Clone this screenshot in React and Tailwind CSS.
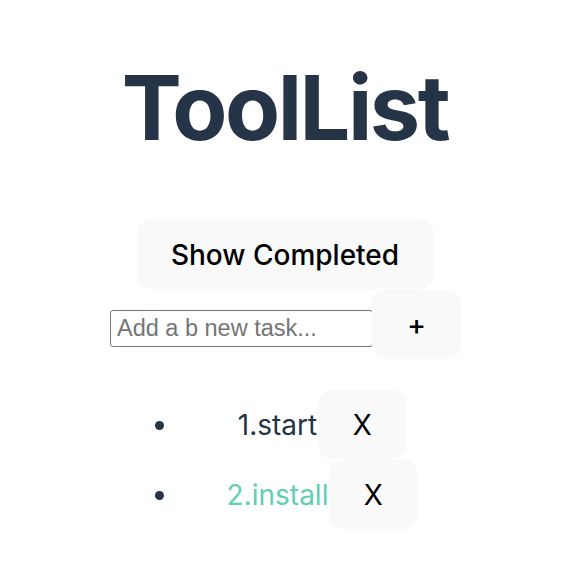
import { useState } from 'react';

const btn = 'rounded-[14px] bg-[#f9f9f9] text-black border border-transparent font-medium';

export default function App() {
  const [tasks, setTasks] = useState([
    { id: 1, text: 'start', done: false },
    { id: 2, text: 'install', done: true },
  ]);
  const [draft, setDraft] = useState('');

  const addTask = () => {
    if (!draft.trim()) return;
    setTasks([...tasks, { id: tasks.length + 1, text: draft, done: false }]);
    setDraft('');
  };

  return (
    <div className="min-h-screen bg-white pl-[8px] text-center" style={{ fontFamily: 'Inter, "Noto Sans", sans-serif' }}>
      <h1 className="pt-[63px] text-[90px] font-bold leading-none tracking-[-2.5px] text-[#253446]">ToolList</h1>

      <div className="mt-[67px]">
        <button className={`${btn} h-[69px] w-[297px] text-[28px]`}>Show Completed</button>
      </div>

      <div className="mt-px flex items-end justify-center pl-px">
        <input
          value={draft}
          onChange={(e) => setDraft(e.target.value)}
          placeholder="Add a b new task..."
          className="mb-[12px] h-[37px] w-[263px] rounded-[3px] border border-[#767676] px-[6px] text-[23.5px] placeholder:text-[#757575]"
          style={{ fontFamily: '"Liberation Sans", Arial, sans-serif' }}
        />
        <button onClick={addTask} className={`${btn} -ml-px h-[69px] w-[89px] text-[28px]`}>+</button>
      </div>

      <ul className="ml-[172px] mt-[31px] w-[284px] list-disc text-[28px] text-[#253446]">
        {tasks.map((t) => (
          <li key={t.id} className="mb-px text-center">
            <span className={t.done ? 'text-[#60cfb3]' : ''}>{t.id}.{t.text}</span>
            <button
              onClick={() => setTasks(tasks.filter((x) => x.id !== t.id))}
              className={`${btn} ml-[1px] h-[69px] w-[88px] text-[28px] font-normal`}
            >
              X
            </button>
          </li>
        ))}
      </ul>
    </div>
  );
}
